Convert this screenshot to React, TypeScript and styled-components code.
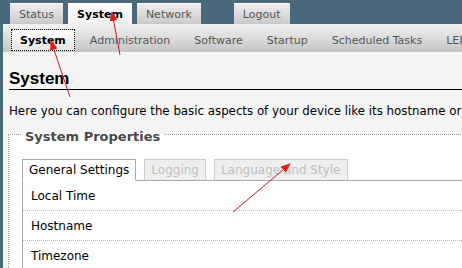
import React from "react";
import styled, { createGlobalStyle } from "styled-components";

const GlobalStyle = createGlobalStyle`
  html, body {
    margin: 0;
    padding: 0;
  }
  body {
    background: #4a697c;
    font-family: "DejaVu Sans", Verdana, sans-serif;
    font-size: 11px;
    color: #000;
  }
`;

const topTabs = [
  { label: "Status" },
  { label: "System", active: true },
  { label: "Network" },
  { label: "Logout", spaced: true },
];

const subTabs = [
  "System",
  "Administration",
  "Software",
  "Startup",
  "Scheduled Tasks",
  "LED Configuration",
];

const propTabs = ["General Settings", "Logging", "Language and Style"];

const rows = ["Local Time", "Hostname", "Timezone"];

// red annotation arrows drawn over the screenshot
const arrows = [
  { x1: 120, y1: 55, x2: 112, y2: 12 },
  { x1: 70, y1: 97, x2: 51, y2: 41 },
  { x1: 233, y1: 212, x2: 290, y2: 164 },
];

const App = () => {
  return (
    <Page>
      <GlobalStyle />
      <TopNav>
        {topTabs.map((t) => (
          <TopTab key={t.label} $active={t.active} $spaced={t.spaced}>
            {t.label}
          </TopTab>
        ))}
      </TopNav>
      <Main>
        <SubNav>
          {subTabs.map((label, i) => (
            <SubTab key={label} $active={i === 0}>
              {label}
            </SubTab>
          ))}
        </SubNav>
        <Content>
          <Heading>System</Heading>
          <Intro>
            Here you can configure the basic aspects of your device like its
            hostname or
          </Intro>
          <Fieldset>
            <Legend>System Properties</Legend>
            <TabStrip>
              {propTabs.map((label, i) => (
                <PropTab key={label} $active={i === 0}>
                  {label}
                </PropTab>
              ))}
            </TabStrip>
            <Panel>
              {rows.map((r) => (
                <Row key={r}>{r}</Row>
              ))}
            </Panel>
          </Fieldset>
        </Content>
      </Main>
      <Annotations width="462" height="268" viewBox="0 0 462 268">
        <defs>
          <marker
            id="head"
            markerWidth="10"
            markerHeight="8"
            refX="9"
            refY="4"
            orient="auto"
            markerUnits="userSpaceOnUse"
          >
            <path d="M0,0 L10,4 L0,8 z" fill="#e3191b" />
          </marker>
        </defs>
        {arrows.map((a, i) => (
          <line
            key={i}
            x1={a.x1}
            y1={a.y1}
            x2={a.x2}
            y2={a.y2}
            stroke="#d4162a"
            strokeWidth="1"
            markerEnd="url(#head)"
          />
        ))}
      </Annotations>
    </Page>
  );
};

const Page = styled.div`
  position: relative;
  width: 462px;
  height: 268px;
  overflow: hidden;
  background: #4a697c;
`;

const TopNav = styled.nav`
  display: flex;
  align-items: flex-end;
  height: 24px;
  padding-left: 10px;
  box-sizing: border-box;
`;

const TopTab = styled.a<{ $active?: boolean; $spaced?: boolean }>`
  display: flex;
  align-items: center;
  height: 21px;
  padding: 0 9px;
  margin-right: 5px;
  margin-left: ${({ $spaced }) => ($spaced ? "28px" : "0")};
  box-sizing: border-box;
  border-top: 1px solid #fafafa;
  background: ${({ $active }) =>
    $active
      ? "linear-gradient(#fdfdfd, #f1f1f1)"
      : "linear-gradient(#ededed, #c9c9c9)"};
  color: ${({ $active }) => ($active ? "#000" : "#555")};
  font-weight: ${({ $active }) => ($active ? "bold" : "normal")};
  white-space: nowrap;
  cursor: pointer;
`;

const Main = styled.div`
  margin-left: 3px;
  width: 660px;
  height: 244px;
  background: #f4f4f4;
`;

const SubNav = styled.nav`
  display: flex;
  align-items: flex-end;
  height: 28px;
  padding: 0 0 1px 8px;
  box-sizing: border-box;
  background: linear-gradient(#f2f2f2, #c4c4c4);
`;

const SubTab = styled.a<{ $active?: boolean }>`
  display: flex;
  align-items: center;
  height: 22px;
  padding: 0 8px;
  margin-right: 6px;
  box-sizing: border-box;
  border: 1px dotted ${({ $active }) => ($active ? "#000" : "transparent")};
  background: ${({ $active }) =>
    $active ? "linear-gradient(#ffffff, #e4e4e4)" : "transparent"};
  color: ${({ $active }) => ($active ? "#000" : "#555")};
  font-weight: ${({ $active }) => ($active ? "bold" : "normal")};
  white-space: nowrap;
  cursor: pointer;
`;

const Content = styled.div`
  padding-left: 6px;
`;

const Heading = styled.h2`
  margin: 0;
  padding-top: 16px;
  font-family: "Liberation Sans", Arial, sans-serif;
  font-size: 17px;
  font-weight: bold;
  line-height: 21px;
  border-bottom: 1px solid #000;
`;

const Intro = styled.p`
  margin: 14px 0 0;
  font-size: 11.8px;
  line-height: 14px;
  white-space: nowrap;
`;

const Fieldset = styled.fieldset`
  margin: 7px 0 0 -1px;
  padding: 15px 0 0 13px;
  border: 1px dotted #9a9a9a;
  background: #fff;
  min-width: 0;
`;

const Legend = styled.legend`
  padding: 4px 3px 0;
  font-size: 13px;
  font-weight: bold;
  line-height: 15px;
  color: #484848;
`;

const TabStrip = styled.div`
  display: flex;
  border-bottom: 1px solid #aaa;
`;

const PropTab = styled.span<{ $active?: boolean }>`
  display: flex;
  align-items: center;
  height: 22px;
  padding: 0 6px;
  margin: 0 8px -1px 0;
  box-sizing: border-box;
  font-size: 12px;
  border: 1px solid ${({ $active }) => ($active ? "#aaa" : "#cdcdcd")};
  border-bottom: 1px solid ${({ $active }) => ($active ? "#fff" : "#aaa")};
  background: ${({ $active }) => ($active ? "#fff" : "#efefef")};
  color: ${({ $active }) => ($active ? "#000" : "#bdbdbd")};
  white-space: nowrap;
`;

const Panel = styled.div`
  border-left: 1px solid #aaa;
  background: #fff;
`;

const Row = styled.div`
  display: flex;
  align-items: center;
  height: 30px;
  padding-left: 8px;
  box-sizing: border-box;
  border-bottom: 1px dotted #b8b8b8;
  font-size: 12px;
`;

const Annotations = styled.svg`
  position: absolute;
  left: 0;
  top: 0;
  pointer-events: none;
`;

export default App;
